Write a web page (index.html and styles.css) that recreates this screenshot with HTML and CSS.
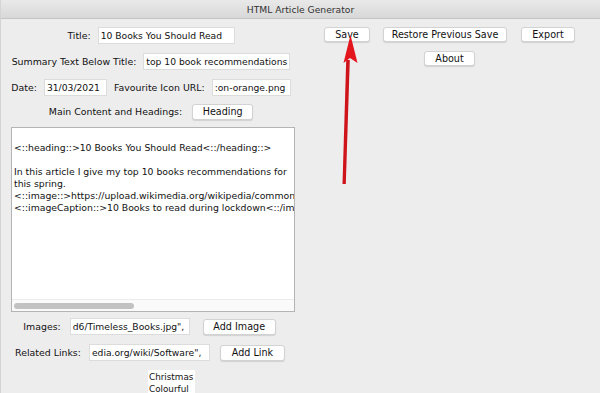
FILE: index.html
```html
<!DOCTYPE html>
<html>
<head>
<meta charset="utf-8">
<link rel="stylesheet" href="styles.css">
</head>
<body>
<div class="window">
  <div class="titlebar">HTML Article Generator</div>
  <div class="main">
    <div class="left">
      <div class="row r1">
        <span class="label">Title:</span>
        <div class="field w-title">10 Books You Should Read</div>
      </div>
      <div class="row r2">
        <span class="label">Summary Text Below Title:</span>
        <div class="field w-summary">top 10 book recommendations</div>
      </div>
      <div class="row r3">
        <span class="label">Date:</span>
        <div class="field w-date">31/03/2021</div>
        <span class="label l-fav">Favourite Icon URL:</span>
        <div class="field w-icon">:on-orange.png</div>
      </div>
      <div class="row r4">
        <span class="label">Main Content and Headings:</span>
        <div class="btn w-heading">Heading</div>
      </div>
      <div class="editor">
        <div class="editor-text">
          <div class="line">&nbsp;</div>
          <div class="line">&lt;::heading::&gt;10 Books You Should Read&lt;::/heading::&gt;</div>
          <div class="line">&nbsp;</div>
          <div class="line">In this article I give my top 10 books recommendations for</div>
          <div class="line">this spring.</div>
          <div class="line">&lt;::image::&gt;https://upload.wikimedia.org/wikipedia/commons/</div>
          <div class="line">&lt;::imageCaption::&gt;10 Books to read during lockdown&lt;::/imageCaption::&gt;</div>
        </div>
        <div class="hscroll"><div class="thumb"></div></div>
      </div>
      <div class="row r5">
        <span class="label">Images:</span>
        <div class="field w-images">d6/Timeless_Books.jpg",</div>
        <div class="btn w-addimg">Add Image</div>
      </div>
      <div class="row r6">
        <span class="label">Related Links:</span>
        <div class="field w-links">edia.org/wiki/Software",</div>
        <div class="btn w-addlink">Add Link</div>
      </div>
      <div class="row r7">
        <div class="list">
          <div class="item">Christmas</div>
          <div class="item">Colourful</div>
        </div>
      </div>
    </div>
    <div class="right">
      <div class="brow b1">
        <div class="btn w-save">Save</div>
        <div class="btn w-restore">Restore Previous Save</div>
        <div class="btn w-export">Export</div>
      </div>
      <div class="brow b2">
        <div class="btn w-about">About</div>
      </div>
    </div>
  </div>
  <svg class="arrow" width="600" height="393" viewBox="0 0 600 393">
    <path d="M341.5 184 L344.8 184 L348.8 60 L345.2 60 Z" fill="#cf131b"/>
    <path d="M349.5 35 L356.5 63 L349 58 L342.5 63 Z" fill="#e3151d"/>
  </svg>
</div>
</body>
</html>
```
FILE: styles.css
```css
* { box-sizing: border-box; }
html, body { margin: 0; padding: 0; }
body {
  width: 600px;
  height: 393px;
  overflow: hidden;
  background: #ededed;
  font-family: "DejaVu Sans", "Liberation Sans", sans-serif;
  font-size: 9.4px;
  color: #111;
}
.window {
  position: relative;
  width: 600px;
  height: 393px;
  background: #eeedee;
  border-left: 1px solid #d4d4d4;
}
.titlebar {
  height: 19px;
  background: linear-gradient(#e9e9e9, #d8d8d8);
  border-bottom: 1px solid #c4c4c4;
  text-align: center;
  line-height: 19px;
  font-size: 9.2px;
  color: #333;
}
.main {
  display: flex;
}
.left {
  width: 300px;
  display: flex;
  flex-direction: column;
}
.right {
  flex: 1;
  display: flex;
  flex-direction: column;
  padding-right: 2px;
}
.row {
  display: flex;
  align-items: center;
  justify-content: center;
  height: 17px;
  gap: 7px;
}
.r1 { margin-top: 8px; }
.r2 { margin-top: 9px; }
.r3 { margin-top: 9px; }
.r4 { margin-top: 7px; gap: 10px; }
.r5 { margin-top: 6px; gap: 9px; padding-right: 3px; }
.r6 { margin-top: 9px; gap: 8px; padding-right: 2px; }
.r5 .btn { margin-left: 4px; }
.r6 .btn { margin-left: 2px; }
.r7 { margin-top: 9px; height: auto; justify-content: flex-start; padding-left: 147px; }
.label { white-space: nowrap; }
.field {
  height: 17px;
  background: #fff;
  border: 1px solid #dcdcdc;
  padding: 0 2px;
  line-height: 15px;
  white-space: nowrap;
  overflow: hidden;
  font-size: 9.2px;
}
.w-title { width: 137px; }
.w-summary { width: 147px; }
.w-date { width: 63px; }
.w-icon { width: 79px; }
.w-images { width: 120px; }
.w-links { width: 121px; }
.btn {
  height: 16px;
  background: #fff;
  border: 1px solid #d2d2d2;
  border-radius: 3px;
  box-shadow: 0 1px 1px rgba(0,0,0,0.12);
  text-align: center;
  line-height: 14px;
  white-space: nowrap;
  font-size: 9.6px;
}
.w-heading { width: 61px; }
.w-addimg { width: 73px; }
.w-addlink { width: 65px; }
.editor {
  margin: 7px 0 0 10px;
  width: 284px;
  height: 185px;
  background: #fff;
  border: 1px solid #b4b4b4;
  display: flex;
  flex-direction: column;
  overflow: hidden;
}
.editor-text {
  flex: 1;
  padding: 2px 0 0 2px;
  font-size: 9.3px;
  line-height: 12px;
  white-space: nowrap;
  overflow: hidden;
  color: #111;
}
.hscroll {
  height: 12px;
  border-top: 1px solid #ececec;
  background: #fafafa;
  padding: 3px 0 0 2px;
}
.thumb {
  width: 120px;
  height: 6px;
  border-radius: 3px;
  background: #c2c2c2;
}
.list {
  width: 47px;
  background: #fff;
  padding: 1px 0 0 1px;
  line-height: 12px;
  font-size: 8.8px;
  height: 23px;
  overflow: hidden;
  white-space: nowrap;
}
.brow {
  display: flex;
  justify-content: center;
  gap: 13px;
  height: 15px;
}
.b1 { margin-top: 8px; gap: 13px; }
.b1 .w-export { margin-left: 1px; }
.b2 { margin-top: 9px; }
.brow .btn { height: 15px; line-height: 13px; }
.w-save { width: 46px; }
.w-restore { width: 124px; }
.w-export { width: 54px; }
.w-about { width: 51px; }
.arrow {
  position: absolute;
  left: 0;
  top: 0;
  pointer-events: none;
}
```
